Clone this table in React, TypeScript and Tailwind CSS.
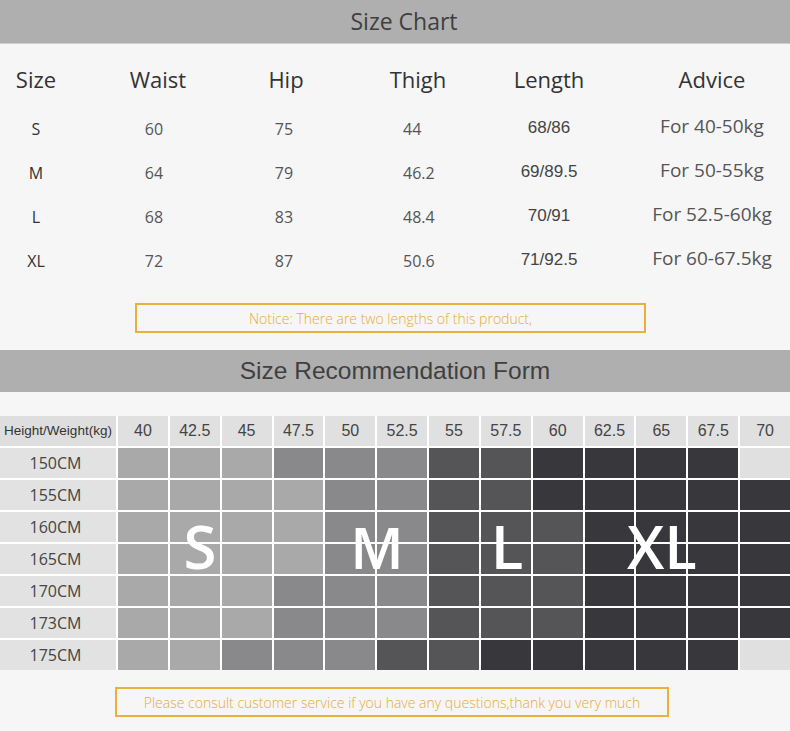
import React from 'react';

const sizeRows = [
  { size: 'S', waist: '60', hip: '75', thigh: '44', length: '68/86', advice: 'For 40-50kg' },
  { size: 'M', waist: '64', hip: '79', thigh: '46.2', length: '69/89.5', advice: 'For 50-55kg' },
  { size: 'L', waist: '68', hip: '83', thigh: '48.4', length: '70/91', advice: 'For 52.5-60kg' },
  { size: 'XL', waist: '72', hip: '87', thigh: '50.6', length: '71/92.5', advice: 'For 60-67.5kg' },
];

const weights = ['40', '42.5', '45', '47.5', '50', '52.5', '55', '57.5', '60', '62.5', '65', '67.5', '70'];

// S / M / L / X(L) / E(mpty) per weight column
const heightRows: [string, string][] = [
  ['150CM', 'SSSMMMLLXXXXE'],
  ['155CM', 'SSSSMMLLXXXXX'],
  ['160CM', 'SSSSMMLLLXXXX'],
  ['165CM', 'SSSSMMLLLXXXX'],
  ['170CM', 'SSSMMMLLLXXXX'],
  ['173CM', 'SSSMMMLLLXXXX'],
  ['175CM', 'SSMMMLLXXXXXE'],
];

const cellColor: Record<string, string> = {
  S: 'bg-[#a9a9a9]',
  M: 'bg-[#89898c]',
  L: 'bg-[#555557]',
  X: 'bg-[#38373b]',
  E: 'bg-[#e0e0e0]',
};

const open = { fontFamily: '"Open Sans", "Noto Sans", sans-serif' };
const arial = { fontFamily: '"Liberation Sans", Arial, sans-serif' };

const SizeChart: React.FC = () => (
  <div>
    <div className="h-[44px] bg-[#afafaf] border-b border-[#cfcfcf] flex items-center justify-center pl-[18px]">
      <span className="text-[23px] text-[#3f3f3f]" style={open}>Size Chart</span>
    </div>

    <div className="pt-[15px]" style={open}>
      <div className="grid grid-cols-[72px_164px_96px_168px_98px_192px] h-[40px] items-center text-[22px] text-[#333] leading-none">
        <div className="text-center">Size</div>
        <div className="text-center pl-[8px]">Waist</div>
        <div className="text-center pl-[4px]">Hip</div>
        <div className="text-center pl-[4px]">Thigh</div>
        <div className="text-center">Length</div>
        <div className="text-center pl-[36px]">Advice</div>
      </div>

      <div className="mt-[8px]">
        {sizeRows.map(r => (
          <div key={r.size} className="grid grid-cols-[72px_164px_96px_168px_98px_192px] h-[44px] items-center leading-none">
            <div className="text-center text-[16px] text-[#333]">{r.size}</div>
            <div className="text-center text-[16px] text-[#555]">{r.waist}</div>
            <div className="text-center text-[16px] text-[#555]">{r.hip}</div>
            <div className="pl-[71px] text-[16px] text-[#555]">{r.thigh}</div>
            <div className="text-center text-[17px] text-[#444] -mt-[4px]" style={arial}>{r.length}</div>
            <div className="text-center pl-[36px] text-[19px] text-[#555] -mt-[6px]">{r.advice}</div>
          </div>
        ))}
      </div>

      <div className="mt-[20px] ml-[135px] w-[511px] h-[30px] border-2 border-[#e9b13a] flex items-center justify-center">
        <span className="text-[14px] font-light text-[#e8ab40]">Notice: There are two lengths of this product,</span>
      </div>
    </div>
  </div>
);

const Recommendation: React.FC = () => (
  <div>
    <div className="mt-[17px] h-[42px] bg-[#afafaf] flex items-center justify-center">
      <span className="text-[24.5px] text-[#3f3f3f]" style={arial}>Size Recommendation Form</span>
    </div>

    <div className="relative mt-[24px]">
      <div className="grid grid-cols-[116px_repeat(13,minmax(0,1fr))] grid-rows-[30px_repeat(7,30px)] gap-[2px] bg-white">
        <div className="bg-[#dedede] flex items-center justify-center text-[13.5px] text-[#333]" style={arial}>
          Height/Weight(kg)
        </div>
        {weights.map(w => (
          <div key={w} className="bg-[#e0e0e0] flex items-center justify-center text-[16px] text-[#444]" style={arial}>
            {w}
          </div>
        ))}
        {heightRows.map(([h, pattern]) => (
          <React.Fragment key={h}>
            <div className="bg-[#e2e2e2] flex items-center justify-center pr-[5px] text-[16px] text-[#444]" style={open}>
              {h}
            </div>
            {pattern.split('').map((c, i) => (
              <div key={i} className={cellColor[c]} />
            ))}
          </React.Fragment>
        ))}
      </div>

      <span className="absolute left-[200px] top-[100px] -translate-x-1/2 text-[60px] leading-[60px] font-semibold text-white" style={open}>S</span>
      <span className="absolute left-[377px] top-[101px] -translate-x-1/2 text-[58px] leading-[60px] font-semibold text-white" style={open}>M</span>
      <span className="absolute left-[507px] top-[100px] -translate-x-1/2 text-[60px] leading-[60px] font-semibold text-white" style={open}>L</span>
      <span className="absolute left-[662px] top-[100px] -translate-x-1/2 text-[60px] leading-[60px] font-semibold text-white" style={open}>XL</span>
    </div>

    <div className="mt-[17px] ml-[115px] w-[554px] h-[30px] border-2 border-[#e9b13a] flex items-center justify-center" style={open}>
      <span className="text-[14px] font-light text-[#e8ab40]">Please consult customer service if you have any questions,thank you very much</span>
    </div>
  </div>
);

export default function App() {
  return (
    <div className="w-[790px] min-h-[731px] bg-[#f6f6f6] overflow-hidden">
      <SizeChart />
      <Recommendation />
    </div>
  );
}
